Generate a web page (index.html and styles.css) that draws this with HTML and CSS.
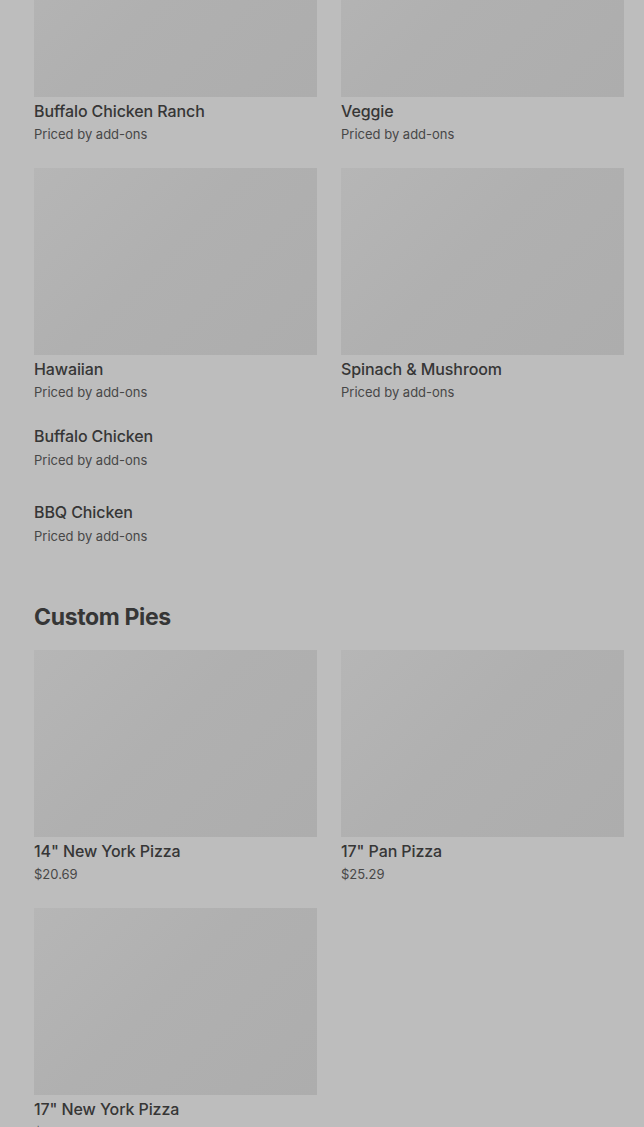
FILE: index.html
```html
<!DOCTYPE html>
<html lang="en">
<head>
<meta charset="utf-8">
<title>Menu</title>
<link rel="stylesheet" href="styles.css">
</head>
<body>
<main class="page">
  <section class="section first">
    <div class="grid">
      <div class="card"><div class="thumb"></div><div class="name">Buffalo Chicken Ranch</div><div class="meta">Priced by add-ons</div></div>
      <div class="card"><div class="thumb"></div><div class="name">Veggie</div><div class="meta">Priced by add-ons</div></div>
      <div class="card"><div class="thumb"></div><div class="name">Hawaiian</div><div class="meta">Priced by add-ons</div></div>
      <div class="card"><div class="thumb"></div><div class="name">Spinach &amp; Mushroom</div><div class="meta">Priced by add-ons</div></div>
    </div>
    <ul class="list">
      <li class="item"><div class="name">Buffalo Chicken</div><div class="meta gap">Priced by add-ons</div></li>
      <li class="item"><div class="name">BBQ Chicken</div><div class="meta gap">Priced by add-ons</div></li>
    </ul>
  </section>
  <section class="section">
    <h2 class="heading">Custom Pies</h2>
    <div class="grid">
      <div class="card"><div class="thumb"></div><div class="name">14" New York Pizza</div><div class="meta">$20.69</div></div>
      <div class="card"><div class="thumb"></div><div class="name">17" Pan Pizza</div><div class="meta">$25.29</div></div>
      <div class="card"><div class="thumb"></div><div class="name">17" New York Pizza</div><div class="meta">$25.29</div></div>
    </div>
  </section>
</main>
</body>
</html>
```
FILE: styles.css
```css
html, body {
  margin: 0;
  padding: 0;
  background: #bdbdbd;
  overflow: hidden;
}
body {
  font-family: Inter, "Noto Sans", sans-serif;
  color: #383838;
}
.page {
  padding: 0 20px 0 34px;
  margin-top: -90px;
}
.grid {
  display: grid;
  grid-template-columns: 283px 283px;
  column-gap: 24px;
  row-gap: 24px;
}
.card {
  display: flex;
  flex-direction: column;
}
.thumb {
  height: 187px;
  background: linear-gradient(135deg, #b6b6b6 0%, #b0b0b0 45%, #adadad 100%);
}
.name {
  margin-top: 4px;
  font-size: 16px;
  line-height: 20px;
  font-weight: 500;
  color: #363636;
  letter-spacing: -0.1px;
}
.meta {
  margin-top: 3px;
  font-size: 13px;
  line-height: 20px;
  color: #474747;
}
.meta.gap {
  margin-top: 4px;
}
.list {
  list-style: none;
  margin: 8px 0 0;
  padding: 0;
}
.item {
  padding: 16px 0;
}
.item .name {
  margin-top: 0;
}
.heading {
  margin: 39px 0 17px;
  font-size: 23px;
  line-height: 32px;
  font-weight: 700;
  color: #363636;
  letter-spacing: -0.35px;
}
```
